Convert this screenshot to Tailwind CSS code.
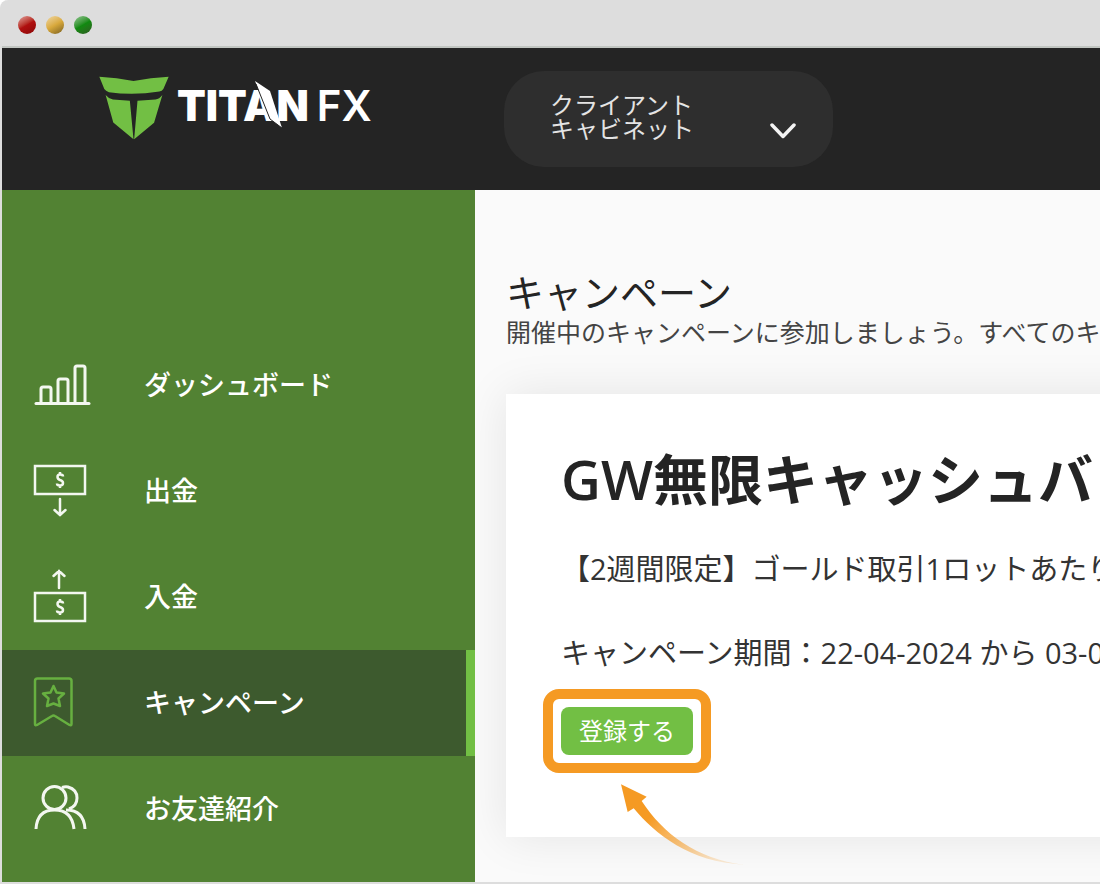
<!DOCTYPE html>
<html lang="ja">
<head>
    <meta charset="UTF-8">
    <meta name="viewport" content="width=device-width, initial-scale=1.0">
    <title>キャンペーン | Titan FX</title>
    <script src="https://cdn.jsdelivr.net/npm/@tailwindcss/browser@4"></script>
</head>
<body class="bg-white font-['Open_Sans','Noto_Sans_CJK_JP',sans-serif] text-[#242424]">
    <div class="flex min-h-screen flex-col overflow-hidden rounded-tl-lg border-b-2 border-l-2 border-[#ddd] bg-[#ddd]">

        <!-- window bar -->
        <div class="flex h-12 shrink-0 items-center gap-[10px] border-b-2 border-[#c1c5c1] pl-4 pt-1">
            <span class="size-[18px] rounded-full bg-linear-150 from-[#e0a0a0] via-[#b01010] via-50% to-[#8a0808]"></span>
            <span class="size-[18px] rounded-full bg-linear-150 from-[#f0d8a0] via-[#d9a93c] via-50% to-[#7a6020]"></span>
            <span class="size-[18px] rounded-full bg-linear-150 from-[#90c890] via-[#0f8a0f] via-50% to-[#2a5a20]"></span>
        </div>

        <header class="flex h-[142px] shrink-0 items-center bg-[#242424]">
            <a href="#" aria-label="TITAN FX" class="flex w-[473px] shrink-0 items-center gap-2 pb-[22px] pl-[97px] text-white">
                <svg class="h-16 w-[70px]" viewBox="26 34 211 191" fill="#72bf44">
                    <path d="M27 35 Q80 38 130 48 Q182 38 236 35 L220 72 Q216 78 208 80 Q130 92 56 82 Q46 78 42 72 Z"/>
                    <path d="M46 90 Q56 102 68 104 L119 108 L130 224 L69 173 Z"/>
                    <path d="M217 90 Q208 102 196 104 L142 108 L132 224 L192 174 Z"/>
                </svg>
                <span class="relative flex items-center pb-1 font-['Inter',sans-serif] text-[42px] leading-none">
                    <span class="font-black">TITAN</span><span class="pl-2 font-semibold">FX</span>
                    <svg class="absolute -top-1 left-[78px] h-12 w-7" viewBox="0 0 28 48" fill="#fff">
                        <path d="M0 0 L15 10 L27 47 L15 38 Z"/>
                        <path d="M1 3 L15 38 L27 47" fill="none" stroke="#242424"/>
                    </svg>
                </span>
            </a>
            <button type="button" aria-haspopup="menu" class="ml-[29px] flex h-24 w-[329px] items-center justify-between rounded-[40px] bg-[#2e2e2e] pl-[46px] pr-9 text-left text-2xl leading-6 text-[#e4e4e4]">
                <span class="pb-1">クライアント<br>キャビネット</span>
                <svg class="mt-6 h-4 w-7" viewBox="0 0 28 16" fill="none" stroke="#f4f4f4" stroke-width="3.500" stroke-linecap="round" stroke-linejoin="round">
                    <path d="M3 2 L14 13.500 L25 2"/>
                </svg>
            </button>
        </header>

        <div class="flex grow">
            <nav class="w-[473px] shrink-0 bg-[#528233] pt-[142px] text-[27px] font-medium text-white">
                <a href="#" class="flex h-[106px] items-center pl-[30px]">
                    <svg class="h-14 w-28" viewBox="0 0 112 56" fill="none" stroke="#f3f7f0" stroke-width="3" stroke-linecap="round">
                        <path d="M4 46.500 H57"/>
                        <path d="M9 46 V32 Q9 30 11 30 H17 Q19 30 19 32 V46"/>
                        <path d="M26 46 V24 Q26 22 28 22 H34 Q36 22 36 24 V46"/>
                        <path d="M43 46 V11 Q43 9 45 9 H51 Q53 9 53 11 V46"/>
                    </svg>
                    ダッシュボード
                </a>
                <a href="#" class="flex h-[106px] items-center pl-[30px]">
                    <svg class="h-14 w-28" viewBox="0 0 112 56" fill="none" stroke="#f3f7f0" stroke-width="2.500">
                        <rect x="3" y="3" width="50" height="28"/>
                        <path d="M31 13.500 Q31 11.500 28 11.500 Q25.500 11.500 25.500 14 Q25.500 16 28 17 Q31 18 31 20 Q31 22.500 28 22.500 Q25 22.500 25 20.500 M28 9 V11.500 M28 22.500 V25"/>
                        <path d="M28 36 V52 M22.500 47 L28 52 L33.500 47" stroke-linecap="round"/>
                    </svg>
                    出金
                </a>
                <a href="#" class="flex h-[106px] items-center pl-[30px]">
                    <svg class="h-14 w-28" viewBox="0 0 112 56" fill="none" stroke="#f3f7f0" stroke-width="2.500">
                        <rect x="3" y="24" width="50" height="28"/>
                        <path d="M31 34.500 Q31 32.500 28 32.500 Q25.500 32.500 25.500 35 Q25.500 37 28 38 Q31 39 31 41 Q31 43.500 28 43.500 Q25 43.500 25 41.500 M28 30 V32.500 M28 43.500 V46"/>
                        <path d="M27 19 V2 M21.500 7 L27 2 L32.500 7" stroke-linecap="round"/>
                    </svg>
                    入金
                </a>
                <a href="#" aria-current="page" class="flex h-[106px] items-center border-r-[9px] border-[#72bf44] bg-[#3d5a2e] pl-[30px]">
                    <svg class="h-14 w-28" viewBox="0 0 112 56" fill="none" stroke="#67b040" stroke-width="2.500" stroke-linejoin="round">
                        <path d="M3 6 Q3 3.500 5.500 3.500 H37 Q39.500 3.500 39.500 6 V49 Q39.500 51 37.500 50 L23 41 Q21.500 40 20 41 L5 50 Q3 51 3 49 Z"/>
                        <path d="M21.500 11 L24.500 17.500 L32 18.500 L26.500 23.500 L28 31 L21.500 28.500 L15 31 L16.500 23.500 L11 18.500 L18.500 17.500 Z"/>
                    </svg>
                    キャンペーン
                </a>
                <a href="#" class="flex h-[106px] items-center pl-[30px]">
                    <svg class="h-14 w-28" viewBox="0 0 112 56" fill="none" stroke="#f3f7f0" stroke-width="3">
                        <circle cx="22.500" cy="17" r="11.500"/>
                        <path d="M30 6.500 Q33 5.500 36 6 Q45 8.500 45 17 Q45 25 37 28"/>
                        <path d="M4 48 Q5 29 22.500 29 Q40 29 42 48"/>
                        <path d="M34 29 Q52 29 53 48"/>
                    </svg>
                    お友達紹介
                </a>
            </nav>

            <main class="min-w-0 grow overflow-hidden bg-[#fafafa] pb-10 pl-[31px] pt-[78px] whitespace-nowrap">
                <h1 class="text-[38px] leading-12">キャンペーン</h1>
                <p class="text-[25px] leading-8 text-[#444]">開催中のキャンペーンに参加しましょう。すべてのキャンペーン</p>

                <section class="mt-[46px] w-[1200px] bg-white px-[55px] pb-[82px] pt-[53px] text-[29px] leading-10 text-[#333] shadow-[0_0_44px_rgba(0,0,0,0.09)]">
                    <h2 class="text-[55px] font-semibold leading-16 text-[#242424]">GW無限キャッシュバックキャンペーン</h2>
                    <p class="mt-[38px]">【2週間限定】ゴールド取引1ロットあたり</p>
                    <p class="mt-11">キャンペーン期間：22-04-2024 から 03-05-2024</p>
                    <div class="relative mt-[34px] h-12 w-[132px]">
                        <button type="button" class="size-full rounded-lg bg-[#72bf44] text-2xl text-white">登録する</button>
                        <div class="pointer-events-none absolute -inset-[18px] rounded-2xl border-10 border-[#f59a23]"></div>
                        <svg class="pointer-events-none absolute left-[60px] top-[77px] h-[82px] w-[124px]" viewBox="243 490 372 246">
                            <defs>
                                <linearGradient id="fade" x1="0" y1="0" x2="1" y2="0.6">
                                    <stop offset="0.35" stop-color="#f59a23"/>
                                    <stop offset="1" stop-color="#f59a23" stop-opacity="0.2"/>
                                </linearGradient>
                            </defs>
                            <path fill="url(#fade)" d="M243 491 L320 528 L305 541 C370 640 470 715 612 732 C450 725 345 640 281 563 L263 574 Z"/>
                        </svg>
                    </div>
                </section>
            </main>
        </div>
    </div>
</body>
</html>
